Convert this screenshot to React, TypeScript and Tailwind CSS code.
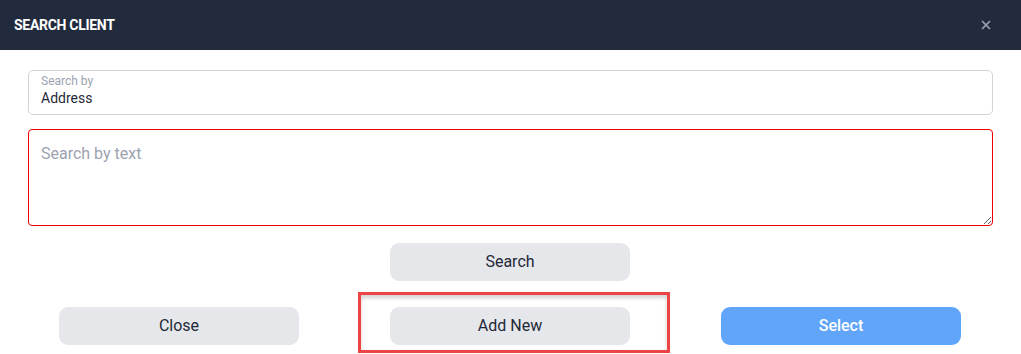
import { X } from 'lucide-react';

export default function App() {
  return (
    <div className="w-[1021px] h-[354px] bg-white overflow-hidden font-['Roboto',sans-serif]">
      {/* Header */}
      <div className="h-[50px] bg-[#222b3e] flex items-center justify-between pl-[14px] pr-[28px]">
        <div className="text-white text-[14px] font-bold tracking-[-0.3px]">SEARCH CLIENT</div>
        <X className="text-[#9ba1ac]" size={14} strokeWidth={3} />
      </div>

      <div className="px-[28px] pt-[20px]">
        {/* Search by select */}
        <div className="h-[45px] border border-[#d1d5db] rounded-[5px] px-[12px] pt-[3px]">
          <div className="text-[12px] leading-[14px] text-[#9ca3af]">Search by</div>
          <div className="text-[14px] leading-[18px] text-[#1f2937] mt-[1px]">Address</div>
        </div>

        {/* Text area */}
        <textarea
          className="mt-[14px] block w-full h-[97px] border border-[#ee0000] rounded-[4px] px-[12px] pt-[12px] text-[16px] placeholder:text-[#9ca3af] outline-none"
          placeholder="Search by text"
        />

        <div className="flex justify-center mt-[17px] pr-[1px]">
          <button className="w-[240px] h-[38px] rounded-[9px] bg-[#e5e7eb] text-[16px] text-[#1f2937]">Search</button>
        </div>

        <div className="flex gap-[91px] mt-[26px] pl-[31px]">
          <button className="w-[240px] h-[38px] rounded-[9px] bg-[#e5e7eb] text-[16px] text-[#1f2937]">Close</button>
          <div className="relative">
            <button className="w-[240px] h-[38px] rounded-[9px] bg-[#e5e7eb] text-[16px] text-[#1f2937]">Add New</button>
            <div className="absolute left-[-32px] top-[-15px] w-[312px] h-[61px] border-[3px] border-[#ef4444] shadow-[inset_0_3px_4px_rgba(0,0,0,0.18)]" />
          </div>
          <button className="w-[240px] h-[38px] rounded-[9px] bg-[#60a5fa] text-[16px] font-medium text-white">Select</button>
        </div>
      </div>
    </div>
  );
}
